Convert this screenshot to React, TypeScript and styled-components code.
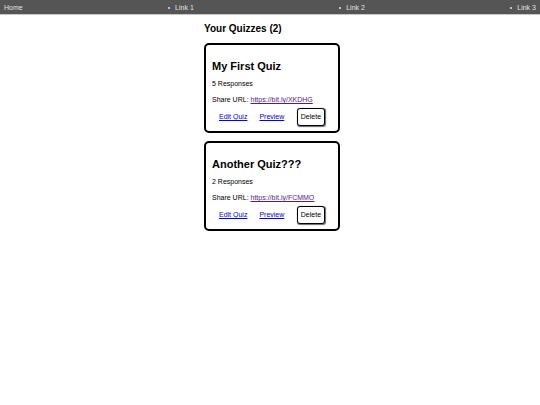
import React from "react";
import styled, { createGlobalStyle } from "styled-components";

const GlobalStyle = createGlobalStyle`
  html, body { margin: 0; padding: 0; background: #fff; }
  body { font-family: "Liberation Sans", Arial, sans-serif; color: #000; }
`;

const NavBar = styled.nav`
  display: flex;
  justify-content: space-between;
  align-items: center;
  height: 13px;
  padding: 1px 4px 0;
  background: #555555;
  border-bottom: 1px solid #c8c8c8;
  font-size: 7px;
  line-height: 8px;
  color: #e2e2e2;
`;

const NavItem = styled.span<{ $bullet?: boolean }>`
  display: flex;
  align-items: center;
  &::before {
    content: "";
    display: ${(p) => (p.$bullet ? "block" : "none")};
    width: 2px;
    height: 2px;
    border-radius: 50%;
    background: #e2e2e2;
    margin-right: 5px;
  }
`;

const Main = styled.main`
  width: 140px;
  margin: 0 auto;
  padding: 8px 0 0 4px;
  box-sizing: border-box;
`;

const Heading = styled.h2`
  margin: 0 0 8px;
  font-size: 10px;
  line-height: 12px;
  font-weight: bold;
`;

const Card = styled.section`
  border: 2px solid #000;
  border-radius: 5px;
  padding: 6px 6px 5px;
  margin-bottom: 8px;
`;

const Title = styled.h3`
  margin: 9px 0 7px;
  font-size: 11px;
  line-height: 13px;
  font-weight: bold;
`;

const Line = styled.p`
  margin: 0 0 8px;
  font-size: 7px;
  line-height: 8px;
`;

const ShareLink = styled.a`
  color: #551a8b;
`;

const Actions = styled.div`
  display: flex;
  align-items: center;
  margin-top: -4px;
  padding-left: 1px;
  font-size: 7px;
  line-height: 8px;
  white-space: nowrap;
`;

const ActionLink = styled.a`
  flex: none;
  margin: 0 6px;
  color: #0000ee;
`;

const DeleteButton = styled.button`
  flex: none;
  margin: 0 0 0 7px;
  padding: 4px 2.5px;
  font-family: "Liberation Sans", Arial, sans-serif;
  font-size: 7px;
  line-height: 8px;
  color: #000;
  background: #fff;
  border: 1.5px solid #000;
  border-radius: 3px;
  box-shadow: 0.5px 0.5px 1px rgba(0, 0, 0, 0.6);
`;

const quizzes = [
  { title: "My First Quiz", responses: 5, url: "https://bit.ly/XKDHG" },
  { title: "Another Quiz???", responses: 2, url: "https://bit.ly/FCMMO" },
];

export default function App() {
  return (
    <>
      <GlobalStyle />
      <NavBar>
        <NavItem>Home</NavItem>
        <NavItem $bullet>Link 1</NavItem>
        <NavItem $bullet>Link 2</NavItem>
        <NavItem $bullet>Link 3</NavItem>
      </NavBar>
      <Main>
        <Heading>Your Quizzes ({quizzes.length})</Heading>
        {quizzes.map((q) => (
          <Card key={q.title}>
            <Title>{q.title}</Title>
            <Line>{q.responses} Responses</Line>
            <Line>
              Share URL: <ShareLink href="#">{q.url}</ShareLink>
            </Line>
            <Actions>
              <ActionLink href="#">Edit Quiz</ActionLink>
              <ActionLink href="#">Preview</ActionLink>
              <DeleteButton>Delete</DeleteButton>
            </Actions>
          </Card>
        ))}
      </Main>
    </>
  );
}
